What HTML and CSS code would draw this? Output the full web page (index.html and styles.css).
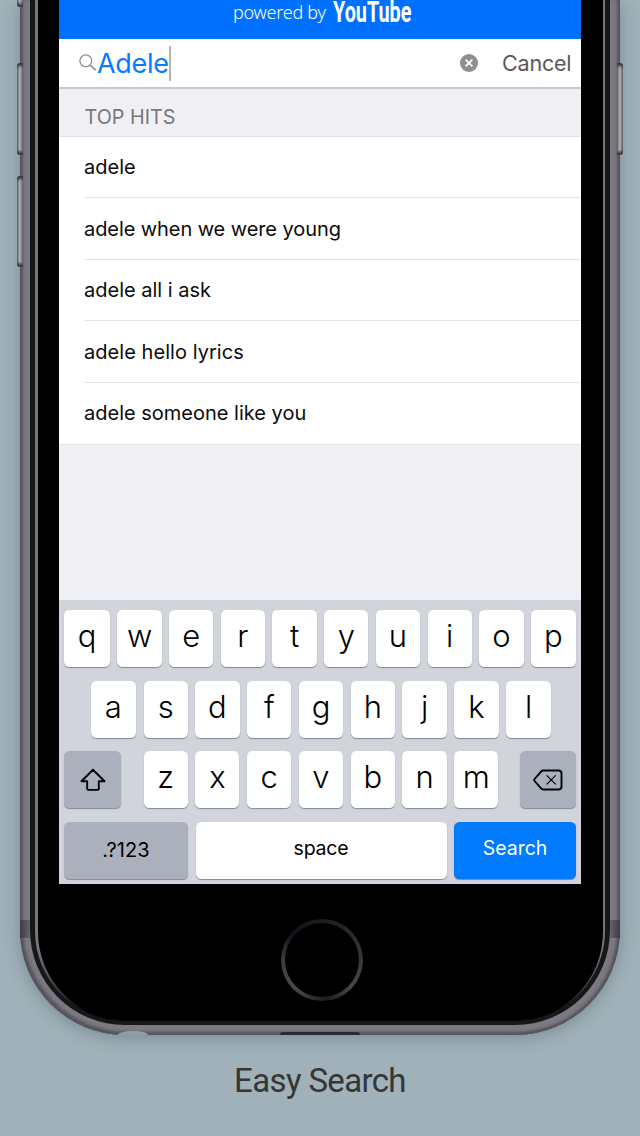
FILE: index.html
```html
<!DOCTYPE html>
<html lang="en">
<head>
<meta charset="utf-8">
<title>Easy Search</title>
<link rel="stylesheet" href="styles.css">
</head>
<body>
<main class="page">
  <div class="phone">
    <i class="side-button mute"></i>
    <i class="side-button volume-up"></i>
    <i class="side-button volume-down"></i>
    <i class="side-button power"></i>
    <i class="antenna antenna-left"></i>
    <i class="antenna antenna-right"></i>
    <i class="notch"></i>
    <i class="port"></i>
    <div class="bezel"><div class="rim"><div class="face">
      <div class="screen">
        <header class="brand"><span class="powered">powered by</span><span class="logo"><span class="logo-text">YouTube</span></span></header>
        <div class="search">
          <svg class="lens" width="18" height="18" viewBox="0 0 18 18"><circle cx="6.8" cy="6.8" r="5.9"/><path d="M11 11l5.6 5.2" stroke-width="1.7"/></svg>
          <span class="query">Adele</span><i class="caret"></i>
          <svg class="clear" width="18" height="18" viewBox="0 0 18 18"><circle cx="9" cy="9" r="9"/><path d="M5.6 5.6l6.8 6.8M12.4 5.6l-6.8 6.8"/></svg>
          <span class="cancel">Cancel</span>
        </div>
        <h2 class="section">TOP HITS</h2>
        <ul class="hits">
          <li>adele</li>
          <li class="tight">adele when we were young</li>
          <li>adele all i ask</li>
          <li class="loose">adele hello lyrics</li>
          <li>adele someone like you</li>
        </ul>
        <div class="keyboard">
          <div class="row row-top"><b>q</b><b>w</b><b>e</b><b>r</b><b>t</b><b>y</b><b>u</b><b>i</b><b>o</b><b>p</b></div>
          <div class="row row-mid"><b>a</b><b>s</b><b>d</b><b>f</b><b>g</b><b>h</b><b>j</b><b>k</b><b>l</b></div>
          <div class="row row-low">
            <b class="gray"><svg width="28" height="24" viewBox="0 0 28 24"><path d="M14 1.800L2.400 13.200h5.800v7.500q0 1.200 1.200 1.200h9.200q1.200 0 1.200-1.200v-7.500h5.800z"/></svg></b>
            <div class="letters"><b>z</b><b>x</b><b>c</b><b>v</b><b>b</b><b>n</b><b>m</b></div>
            <b class="gray"><svg width="30" height="22" viewBox="0 0 30 22"><path d="M10 1.500h15.500q3 0 3 3v13q0 3-3 3H10q-1 0-1.700-.8L1.600 12q-.8-1 0-2l6.700-7.700Q9 1.500 10 1.500z"/><path d="M13.700 6.400l9 9M22.700 6.400l-9 9" stroke-width="1.300"/></svg></b>
          </div>
          <div class="row row-base"><b class="gray word numbers">.?123</b><b class="word space">space</b><b class="blue word">Search</b></div>
        </div>
      </div>
      <div class="home"></div>
    </div></div></div>
  </div>
  <p class="caption">Easy Search</p>
</main>
</body>
</html>
```

FILE: styles.css
```css
* { box-sizing: border-box; }
body { margin: 0; font-family: Inter, "Liberation Sans", sans-serif; }
.page { width: 640px; height: 1136px; overflow: hidden; background: #a0b1b9; display: flex; flex-direction: column; }

/* Device shell, from the metal edge inwards */
.phone { position: relative; flex: none; height: 1035px; margin: 0 20px; padding: 0 10px 10px; border-radius: 0 0 105px 105px;
  background: #7b7a80; box-shadow: inset 3px -3px 3px #55545a, inset -3px -1px 3px #55545a, 0 3px 16px rgba(65, 82, 94, .4); }
.bezel { height: 1025px; padding: 0 5px 4px; border-radius: 0 0 95px 95px; background: #17171b; }
.rim { height: 1021px; padding: 0 2.500px 0; border-radius: 0 0 90px 90px; background: linear-gradient(#77777b 0 93%, #3b3b40 97%, #050506 99%); }
.face { height: 1020px; padding: 0 0 0 21.500px; border-radius: 0 0 88px 88px; background: #000; }
.side-button { position: absolute; width: 6px; border-radius: 3px 0 0 3px; background: linear-gradient(90deg, #5d5c62, #b2b2b8 45%, #626167); box-shadow: inset 0 5px 3px -2px #37373b, inset 0 -5px 3px -2px #37373b; }
.mute { left: -3px; top: -60px; height: 67px; }
.volume-up { left: -3px; top: 63px; height: 92px; }
.volume-down { left: -3px; top: 176px; height: 91px; }
.power { right: -3px; top: 63px; height: 92px; border-radius: 0 3px 3px 0; }
.antenna { position: absolute; top: 920px; width: 10px; height: 18px; }
.antenna-left { left: 0; background: linear-gradient(90deg, #3b3b3e, #66666a); }
.antenna-right { right: 0; background: linear-gradient(90deg, #66666a, #3b3b3e); }
.notch { position: absolute; left: 98px; bottom: 0; width: 30px; height: 4px; border-radius: 15px 15px 0 0 / 4px 4px 0 0; background: #929ea6; }
.port { position: absolute; left: 260px; bottom: 0; width: 80px; height: 3px; border-radius: 3px 3px 0 0; background: #29282b; }

.screen { width: 522px; height: 884px; background: #efeff4; display: flex; flex-direction: column; }
.brand { height: 39px; background: #0071ff; color: #fff; display: flex; padding-left: 174px; }
.powered { width: 100px; font: 300 18px/24px "Noto Sans", sans-serif; letter-spacing: -.25px; white-space: nowrap; color: #fff; }
.logo { width: 80px; }
.logo-text { display: inline-block; font: 700 30px/24px Roboto, sans-serif; transform: scaleX(.66); transform-origin: 0 0; }
.search { height: 50px; padding-left: 20px; background: #fff; border-bottom: 2px solid #c8c7cc; display: flex; align-items: center; }
.lens { fill: none; stroke: #8e8e93; stroke-width: 1.300; flex: none; }
.query { width: 71px; font-size: 27px; letter-spacing: -.3px; color: #087aff; white-space: nowrap; }
.caret { width: 2px; height: 35px; background: #b3b3b8; margin-left: 1px; }
.clear { margin-left: 289px; fill: #8e8e93; flex: none; }
.clear path { stroke: #fff; stroke-width: 1.800; }
.cancel { margin-left: 24px; font-size: 21.500px; letter-spacing: -.2px; color: #58585b; white-space: nowrap; }
.section { height: 47.500px; margin: 0; padding: 7px 0 0 25.500px; border-bottom: 1px solid #e2e2e6; font-size: 19.800px; font-weight: 400; line-height: 42px; color: #77777c; }
.hits { margin: 0; padding: 0 0 0 25px; list-style: none; height: 308px; background: #fff; border-bottom: 1px solid #e2e2e6; display: grid; grid-template-rows: repeat(5, 61.600px); }
.hits li { border-bottom: 1px solid #e4e4e6; line-height: 61px; font-size: 20px; color: #0b0b0b; }
.hits li:last-child { border: 0; }
.hits .tight, .hits .loose { line-height: 62px; }
.hits .tight { letter-spacing: -.08px; }
.hits .loose { letter-spacing: .05px; }

.keyboard { margin-top: auto; height: 284px; background: #d1d5db; padding: 10px 5px 4px; display: grid; grid-template-rows: repeat(4, 57px); row-gap: 13.600px; }
.row { display: grid; column-gap: 7.500px; }
.row-top { grid-template-columns: 46px repeat(8, 44.300px) 45px; column-gap: 7.400px; }
.row-mid { grid-template-columns: 45.500px repeat(7, 44.300px) 45px; padding-left: 26.500px; }
.row-low { grid-template-columns: 57px 355px 56px; column-gap: 22px; }
.letters { display: grid; grid-template-columns: repeat(7, 44.200px); column-gap: 7.600px; padding-left: .5px; }
.row-base { grid-template-columns: 124px 251px 122px; }
b { display: flex; align-items: center; justify-content: center; padding-bottom: 5px; border-radius: 5.500px; background: #fff; box-shadow: 0 1px 1px #85888e; font-size: 31px; font-weight: 300; color: #000; }
.row-top b, .letters b { padding-bottom: 7px; }
b svg { fill: none; stroke: #000; stroke-width: 1.900; stroke-linejoin: round; margin-top: 6px; }
.gray { background: #abb1bc; }
.word { font-size: 19.500px; font-weight: 400; }
.numbers { padding-bottom: 1px; font-size: 20px; letter-spacing: .1px; }
.space { letter-spacing: -.2px; }
.blue { background: #007aff; color: #fff; }
.home { width: 82px; height: 82px; margin: 34.500px 0 0 222px; border-radius: 50%; padding: 4px; background: conic-gradient(#1c1c22, #29292f 15%, #3c3b43 28%, #47464e 37%, #1d1c22 48%, #49484f 62%, #3a3940 76%, #101018 86%, #1c1c22); }
.home::before { content: ""; display: block; height: 74px; border-radius: 50%; background: #000; }
.caption { margin: 25px 0 0; text-align: center; font: 400 33px/42px Roboto, sans-serif; letter-spacing: -.65px; color: #363637; }
```
